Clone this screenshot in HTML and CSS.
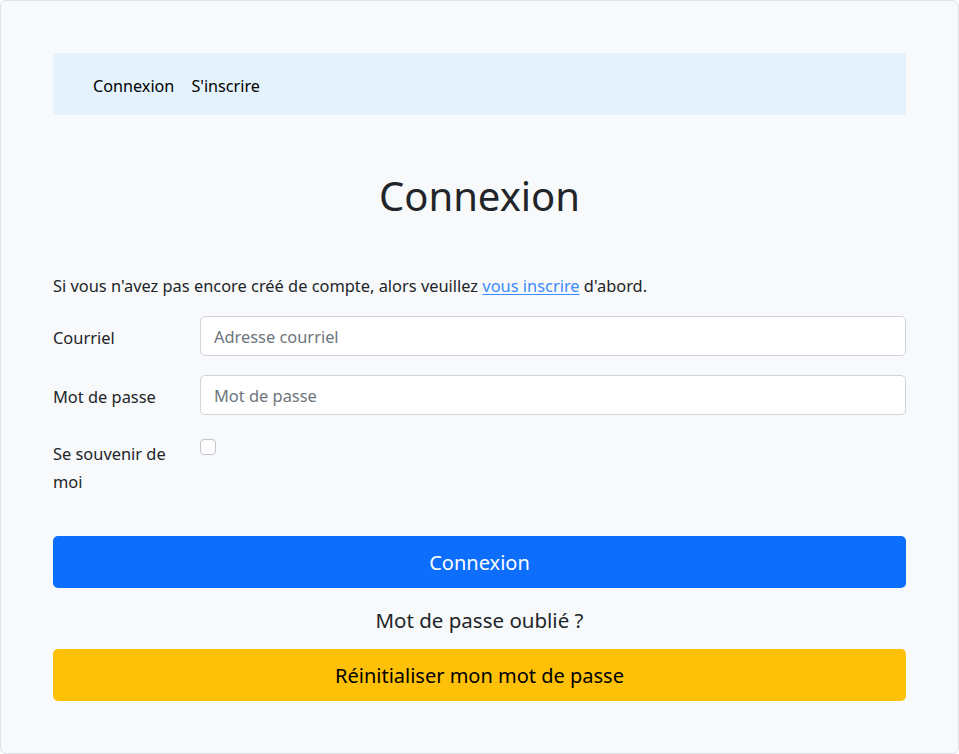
FILE: index.html
```html
<!DOCTYPE html>
<html lang="fr">
<head>
<meta charset="utf-8">
<title>Connexion</title>
<link rel="stylesheet" href="styles.css">
</head>
<body>
<div class="page">
  <nav class="navbar">
    <a class="nav-link" href="#">Connexion</a>
    <a class="nav-link" href="#">S'inscrire</a>
  </nav>
  <h1 class="title">Connexion</h1>
  <p class="intro">Si vous n'avez pas encore créé de compte, alors veuillez <a class="link" href="#">vous inscrire</a> d'abord.</p>
  <form class="form">
    <div class="row">
      <label class="label" for="email">Courriel</label>
      <input class="input" id="email" type="email" placeholder="Adresse courriel">
    </div>
    <div class="row row-last-input">
      <label class="label" for="pwd">Mot de passe</label>
      <input class="input" id="pwd" type="password" placeholder="Mot de passe">
    </div>
    <div class="row row-check">
      <label class="label" for="remember">Se souvenir de moi</label>
      <div class="check-wrap"><input class="check" id="remember" type="checkbox"></div>
    </div>
    <button class="btn btn-primary" type="button">Connexion</button>
    <p class="forgot">Mot de passe oublié ?</p>
    <button class="btn btn-warning" type="button">Réinitialiser mon mot de passe</button>
  </form>
</div>
</body>
</html>
```
FILE: styles.css
```css
html, body {
  margin: 0;
  padding: 0;
  background: #ffffff;
}
body {
  font-family: "Noto Sans", "Open Sans", sans-serif;
  font-size: 16.4px;
  color: #212529;
}
.page {
  box-sizing: border-box;
  width: 959px;
  height: 754px;
  background: #f8f9fa;
  border: 1px solid #dee2e6;
  border-radius: 6px;
  padding: 52px 52px 0 52px;
  display: flex;
  flex-direction: column;
}
.navbar {
  box-sizing: border-box;
  height: 62px;
  background: #e3f2fd;
  border-radius: 3px;
  display: flex;
  align-items: center;
  padding: 4px 0 0 40px;
  gap: 17px;
}
.nav-link {
  color: #000000;
  text-decoration: none;
  font-size: 16.2px;
  line-height: 24px;
}
.title {
  margin: 54px 0 0 0;
  font-size: 40px;
  font-weight: 400;
  line-height: 53px;
  text-align: center;
  color: #212529;
}
.intro {
  margin: 51px 0 0 0;
  line-height: 26px;
  font-size: 16.4px;
}
.link {
  color: #3d8bfd;
  text-decoration: underline;
  text-underline-offset: 2px;
}
.form {
  margin-top: 17px;
  display: flex;
  flex-direction: column;
}
.row {
  display: grid;
  grid-template-columns: 122px 1fr;
  column-gap: 25px;
  margin-bottom: 19px;
}
.row-last-input {
  margin-bottom: 17px;
}
.label {
  padding-top: 8px;
  line-height: 28px;
  font-size: 16.4px;
}
.input {
  box-sizing: border-box;
  height: 40px;
  width: 100%;
  margin: 0;
  border: 1px solid #ced4da;
  border-radius: 5px;
  background: #ffffff;
  padding: 0 13px;
  font-family: inherit;
  font-size: 16.4px;
  color: #212529;
}
.input::placeholder {
  color: #6c757d;
}
.row-check {
  margin-bottom: 40px;
}
.check-wrap {
  padding-top: 7px;
}
.check {
  appearance: none;
  -webkit-appearance: none;
  display: block;
  margin: 0;
  width: 16px;
  height: 16px;
  border: 1px solid #bfc5cc;
  border-radius: 4px;
  background: #ffffff;
}
.btn {
  box-sizing: border-box;
  width: 100%;
  height: 52px;
  border: none;
  border-radius: 5px;
  font-family: inherit;
  font-size: 20px;
  cursor: pointer;
}
.btn-primary {
  background: #0d6efd;
  color: #ffffff;
}
.btn-warning {
  background: #ffc107;
  color: #000000;
}
.forgot {
  margin: 17px 0 14px 0;
  text-align: center;
  font-size: 20.5px;
  line-height: 30px;
}
```
